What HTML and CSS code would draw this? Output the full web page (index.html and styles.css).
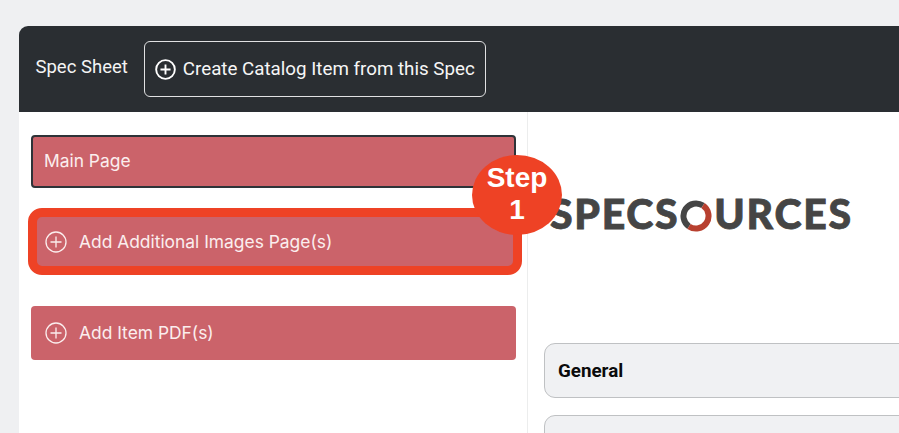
FILE: index.html
```html
<!DOCTYPE html>
<html lang="en">
<head>
<meta charset="utf-8">
<title>Spec Sheet</title>
<link rel="stylesheet" href="styles.css">
</head>
<body>
<div class="card">
  <header class="bar">
    <span class="bar-title">Spec Sheet</span>
    <button class="create-btn">
      <svg class="create-icon" viewBox="0 0 20 20"><circle cx="10" cy="10" r="8.9"/><path d="M10 5.2v9.6M5.2 10h9.6"/></svg>
      Create Catalog Item from this Spec
    </button>
  </header>
  <div class="content">
    <aside class="side">
      <div class="page-btn page-btn-active"><span class="label">Main Page</span></div>
      <div class="page-btn page-btn-add">
        <svg class="add-icon" viewBox="0 0 22 22"><circle cx="11" cy="11" r="10"/><path d="M11 5.5v11M5.5 11h11"/></svg>
        <span class="label">Add Additional Images Page(s)</span>
      </div>
      <div class="page-btn page-btn-pdf">
        <svg class="add-icon" viewBox="0 0 22 22"><circle cx="11" cy="11" r="10"/><path d="M11 5.5v11M5.5 11h11"/></svg>
        <span class="label">Add Item PDF(s)</span>
      </div>
      <div class="ring"></div>
      <div class="step">Step<br>1</div>
    </aside>
    <main class="main">
      <div class="logo">SPECS<svg class="swirl" viewBox="0 0 32 32">
          <path class="swirl-dark" d="M9 26.400A12.500 12.500 0 0 1 23 5.600"/>
          <path class="swirl-red" d="M23 5.600A12.500 12.500 0 0 1 9 26.400"/>
        </svg>URCES</div>
      <section class="acc">General</section>
      <section class="acc acc-next"></section>
    </main>
  </div>
</div>
</body>
</html>
```

FILE: styles.css
```css
* { box-sizing: border-box; }
html, body { margin: 0; height: 100%; }
body {
  background: #eff0f2;
  overflow: hidden;
  padding: 26px 0 0 19px;
  font-family: "Inter", "Liberation Sans", sans-serif;
}
.card { width: 900px; }
.bar {
  height: 86px;
  background: #2a2e32;
  border-radius: 9px 0 0 0;
  display: flex;
  align-items: flex-start;
  padding: 15px 0 0 16.500px;
  font-family: "Roboto", sans-serif;
  color: #f4f4f4;
}
.bar-title { font-size: 18.500px; line-height: 20px; margin-top: 16px; }
.create-btn {
  margin-left: 16px;
  width: 342px;
  height: 56px;
  background: transparent;
  border: 1.500px solid #e0e1e2;
  border-radius: 6px;
  color: #f6f6f6;
  font: 400 18.750px "Roboto", sans-serif;
  display: flex;
  align-items: center;
  gap: 7px;
  padding: 0 0 0 10px;
  white-space: nowrap;
}
.create-icon { width: 21px; height: 21px; flex: none; fill: none; stroke: #fff; stroke-width: 1.800; }
.content { display: flex; height: 321px; overflow: hidden; background: #fff; }
.side {
  position: relative;
  width: 509px;
  flex: none;
  padding: 23px 11px 0 12px;
  border-right: 1px solid #eceded;
}
.page-btn {
  height: 54px;
  background: #cb636a;
  color: #fbeeee;
  border-radius: 4px;
  display: flex;
  align-items: center;
  font-size: 17.400px;
  padding-left: 14px;
  gap: 12px;
}
.label { margin-bottom: 2px; }
.page-btn-active { height: 53px; border: 2px solid #2e3338; padding-left: 11px; }
.page-btn-add { margin-top: 27px; }
.page-btn-pdf { margin-top: 37px; }
.add-icon { width: 22px; height: 22px; flex: none; fill: none; stroke: #fbeeee; stroke-width: 1.300; }
.ring {
  position: absolute;
  left: 9px;
  top: 96px;
  width: 494px;
  height: 67px;
  border: 9px solid #ee4225;
  border-radius: 14px;
}
.step {
  position: absolute;
  left: 453px;
  top: 43px;
  width: 90px;
  height: 80px;
  border-radius: 50%;
  background: #ee4225;
  color: #fff;
  font: 700 28px/32px "Liberation Sans", sans-serif;
  text-align: center;
  padding-top: 7px;
}
.main { flex: 1; padding: 0 0 0 16px; min-width: 0; }
.logo {
  height: 231px;
  padding-top: 77px;
  padding-left: 6px;
  font: 900 41px/50px "Lato", sans-serif;
  letter-spacing: 1.700px;
  -webkit-text-stroke: 0.800px #454545;
  color: #454545;
  white-space: nowrap;
}
.swirl { width: 32px; height: 32px; vertical-align: -3px; margin: 0 2px 0 1px; fill: none; stroke-width: 6; -webkit-text-stroke: 0; }
.swirl-dark { stroke: #454545; }
.swirl-red { stroke: #b8402f; }
.acc {
  height: 55px;
  background: #f0f1f3;
  border: 1px solid #bfc1c3;
  border-radius: 11px;
  display: flex;
  align-items: center;
  padding-left: 13px;
  font: 700 18.800px "Roboto", sans-serif;
  color: #0b0b0b;
}
.acc-next { margin-top: 17px; }
```
